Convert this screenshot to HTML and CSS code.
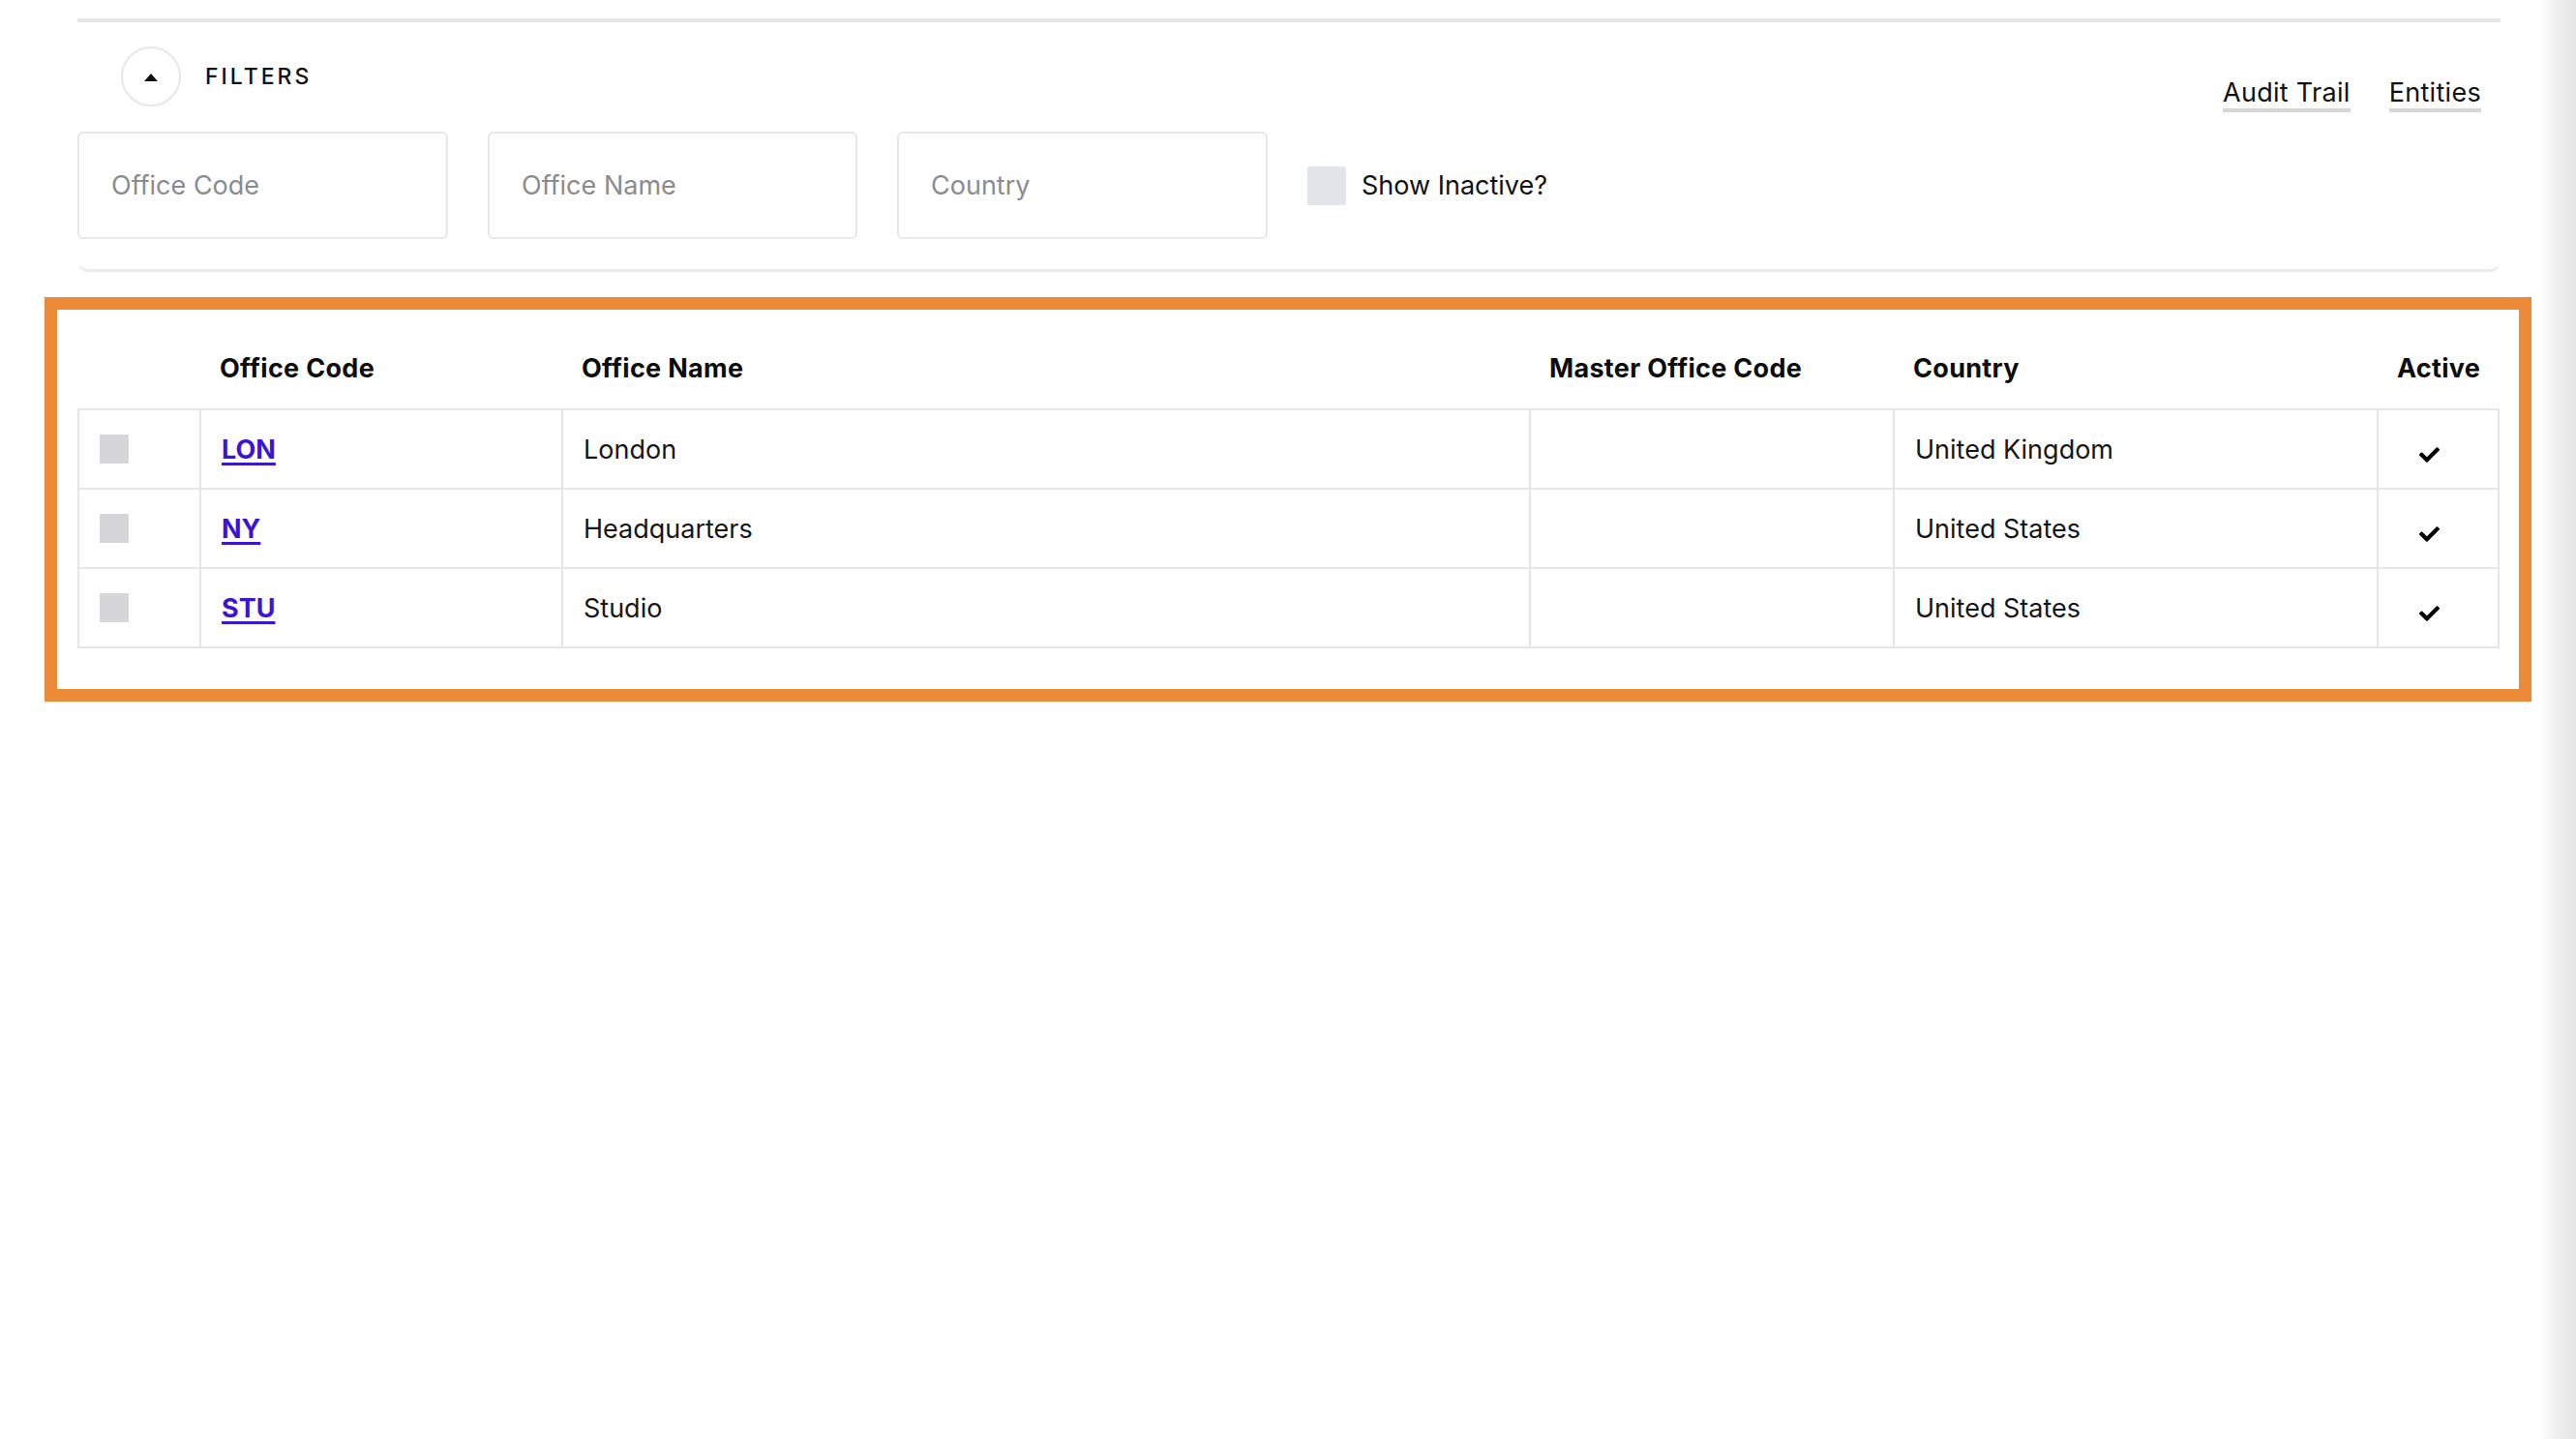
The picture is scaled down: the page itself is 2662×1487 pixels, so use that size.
FILE: index.html
```html
<!DOCTYPE html>
<html lang="en">
<head>
<meta charset="utf-8">
<title>Offices</title>
<link rel="stylesheet" href="styles.css">
</head>
<body>
<div class="page">
  <main class="main">
    <div class="topline"></div>
    <section class="filters">
      <div class="filters-head">
        <div class="toggle-group">
          <button class="toggle" type="button" aria-label="Collapse filters">
            <svg class="caret" viewBox="0 0 14 8" width="14" height="8"><polygon points="7,0 14,8 0,8" fill="#111"/></svg>
          </button>
          <span class="filters-title">FILTERS</span>
        </div>
        <nav class="links">
          <a class="link" href="#">Audit Trail</a>
          <a class="link" href="#">Entities</a>
        </nav>
      </div>
      <div class="filters-row">
        <input class="field" type="text" placeholder="Office Code">
        <input class="field field-mid" type="text" placeholder="Office Name">
        <input class="field" type="text" placeholder="Country">
        <label class="inactive"><span class="box"></span><span class="inactive-label">Show Inactive?</span></label>
      </div>
    </section>
    <section class="results">
      <table class="grid">
        <colgroup>
          <col class="c-sel"><col class="c-code"><col class="c-name"><col class="c-master"><col class="c-country"><col class="c-active">
        </colgroup>
        <thead>
          <tr>
            <th></th>
            <th>Office Code</th>
            <th>Office Name</th>
            <th>Master Office Code</th>
            <th>Country</th>
            <th>Active</th>
          </tr>
        </thead>
        <tbody>
          <tr>
            <td><span class="rowbox"></span></td>
            <td><a class="code" href="#">LON</a></td>
            <td>London</td>
            <td></td>
            <td>United Kingdom</td>
            <td class="act"><svg class="check" viewBox="0 65 512 382" width="21" height="16"><path d="M173.9 439.4l-166.4-166.4c-10-10-10-26.2 0-36.2l36.2-36.2c10-10 26.2-10 36.2 0L192 312.7 432.1 72.6c10-10 26.2-10 36.2 0l36.2 36.2c10 10 10 26.2 0 36.2l-294.4 294.4c-10 10-26.2 10-36.2 0z" fill="#000"/></svg></td>
          </tr>
          <tr>
            <td><span class="rowbox"></span></td>
            <td><a class="code" href="#">NY</a></td>
            <td>Headquarters</td>
            <td></td>
            <td>United States</td>
            <td class="act"><svg class="check" viewBox="0 65 512 382" width="21" height="16"><path d="M173.9 439.4l-166.4-166.4c-10-10-10-26.2 0-36.2l36.2-36.2c10-10 26.2-10 36.2 0L192 312.7 432.1 72.6c10-10 26.2-10 36.2 0l36.2 36.2c10 10 10 26.2 0 36.2l-294.4 294.4c-10 10-26.2 10-36.2 0z" fill="#000"/></svg></td>
          </tr>
          <tr>
            <td><span class="rowbox"></span></td>
            <td><a class="code" href="#">STU</a></td>
            <td>Studio</td>
            <td></td>
            <td>United States</td>
            <td class="act"><svg class="check" viewBox="0 65 512 382" width="21" height="16"><path d="M173.9 439.4l-166.4-166.4c-10-10-10-26.2 0-36.2l36.2-36.2c10-10 26.2-10 36.2 0L192 312.7 432.1 72.6c10-10 26.2-10 36.2 0l36.2 36.2c10 10 10 26.2 0 36.2l-294.4 294.4c-10 10-26.2 10-36.2 0z" fill="#000"/></svg></td>
          </tr>
        </tbody>
      </table>
    </section>
  </main>
  <div class="scrollbar"></div>
</div>
</body>
</html>
```
FILE: styles.css
```css
html, body {
  margin: 0;
  padding: 0;
  background: #ffffff;
}

body {
  font-family: "Inter", "Liberation Sans", sans-serif;
  font-size: 27px;
  color: #111111;
  overflow: hidden;
}

.page {
  display: flex;
  height: 1487px;
}

.main {
  flex: 1;
  padding-top: 19px;
}

.scrollbar {
  width: 42px;
  height: 100%;
  background: linear-gradient(to right, #ffffff 0%, #f0f0f0 45%, #e4e4e4 100%);
}

.topline {
  height: 4px;
  margin: 0 40px 0 80px;
  background: #e5e6ea;
}

.filters {
  margin: 0 40px 0 80px;
  padding: 25px 0 31px 0;
  background: #ffffff;
  border-radius: 0 0 10px 10px;
  box-shadow: 0 4px 2px -1px rgba(0, 0, 0, 0.09);
}

.filters-head {
  display: flex;
  justify-content: space-between;
  align-items: flex-start;
  height: 62px;
  margin-bottom: 26px;
  padding: 0 20px 0 45px;
}

.toggle-group {
  display: flex;
  align-items: center;
  gap: 25px;
  height: 62px;
}

.toggle {
  width: 62px;
  height: 62px;
  padding: 0;
  border: 2px solid #e6e7ea;
  border-radius: 50%;
  background: #ffffff;
  display: flex;
  align-items: center;
  justify-content: center;
}

.caret {
  display: block;
  margin-top: 2px;
}

.filters-title {
  font-size: 23px;
  letter-spacing: 3px;
  font-weight: 500;
  color: #111111;
}

.links {
  display: flex;
  gap: 40px;
  margin-top: 32px;
}

.link {
  display: inline-block;
  line-height: 32px;
  color: #111111;
  letter-spacing: 0.3px;
  text-decoration: none;
  border-bottom: 4px solid #d6d6d8;
}

.filters-row {
  display: flex;
  align-items: center;
  gap: 41px;
}

.field {
  box-sizing: border-box;
  width: 383px;
  height: 111px;
  margin: 0;
  padding: 0 0 0 33px;
  border: 2px solid #e6e7e9;
  border-radius: 6px;
  font-family: "Inter", "Liberation Sans", sans-serif;
  font-size: 27px;
  color: #111111;
  background: #ffffff;
  outline: none;
}

.field-mid {
  width: 382px;
}

.field::placeholder {
  color: #8b8b8d;
}

.inactive {
  display: flex;
  align-items: center;
  gap: 16px;
}

.box {
  width: 40px;
  height: 40px;
  background: #e2e6ea;
  border-radius: 2px;
}

.inactive-label {
  color: #111111;
}

.results {
  margin: 29px 8px 0 46px;
  border: 13px solid #ec8a38;
  padding: 18px 20px 42px 21px;
}

.grid {
  width: 2501px;
  border-collapse: collapse;
  table-layout: fixed;
}

.c-sel { width: 126px; }
.c-code { width: 374px; }
.c-name { width: 1000px; }
.c-master { width: 376px; }
.c-country { width: 500px; }
.c-active { width: 125px; }

.grid th {
  height: 84px;
  padding: 0 20px;
  text-align: left;
  font-weight: 650;
  letter-spacing: 0.3px;
  color: #0d0d0d;
  vertical-align: middle;
}

.grid td {
  height: 80px;
  padding: 0 21px;
  border: 2px solid #e5e6e9;
  color: #161616;
  vertical-align: middle;
}

.rowbox {
  display: block;
  width: 30px;
  height: 30px;
  background: #d6d6d8;
}

.code {
  color: #3b14d4;
  font-weight: 700;
  text-decoration: underline;
  text-decoration-thickness: 3px;
  text-underline-offset: 4px;
}

.grid td.act {
  padding-left: 42px;
}

.check {
  display: block;
  margin-top: 12px;
}
```
